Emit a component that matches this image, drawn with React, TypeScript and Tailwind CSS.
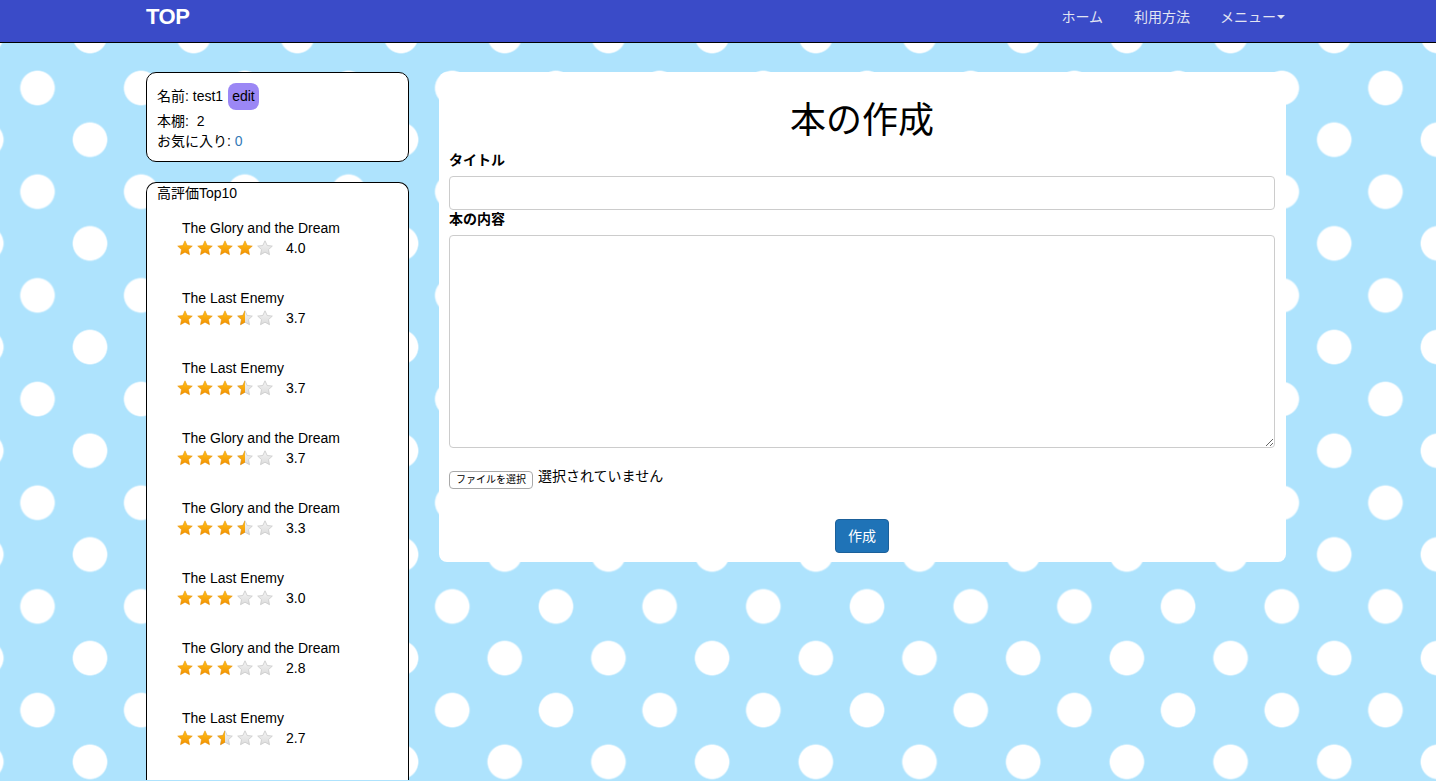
import React from "react";

type Book = { title: string; full: number; half: boolean; score: string };

const books: Book[] = [
  { title: "The Glory and the Dream", full: 4, half: false, score: "4.0" },
  { title: "The Last Enemy", full: 3, half: true, score: "3.7" },
  { title: "The Last Enemy", full: 3, half: true, score: "3.7" },
  { title: "The Glory and the Dream", full: 3, half: true, score: "3.7" },
  { title: "The Glory and the Dream", full: 3, half: true, score: "3.3" },
  { title: "The Last Enemy", full: 3, half: false, score: "3.0" },
  { title: "The Glory and the Dream", full: 3, half: false, score: "2.8" },
  { title: "The Last Enemy", full: 2, half: true, score: "2.7" },
];

const STAR =
  "M8 0.8 L10.2 5.5 L15.3 6.1 L11.5 9.6 L12.5 14.7 L8 12.2 L3.5 14.7 L4.5 9.6 L0.7 6.1 L5.8 5.5 Z";

function Star({ kind, id }: { kind: "full" | "half" | "empty"; id: string }) {
  return (
    <svg width="16" height="16" viewBox="0 0 16 16" className="block">
      <defs>
        <linearGradient id={`g-${id}`} x1="0" y1="0" x2="0" y2="1">
          <stop offset="0" stopColor="#ffc21a" />
          <stop offset="1" stopColor="#f29100" />
        </linearGradient>
        <linearGradient id={`e-${id}`} x1="0" y1="0" x2="0" y2="1">
          <stop offset="0" stopColor="#f4f4f4" />
          <stop offset="1" stopColor="#dcdcdc" />
        </linearGradient>
        <clipPath id={`c-${id}`}>
          <rect x="0" y="0" width="8" height="16" />
        </clipPath>
      </defs>
      {kind !== "full" && (
        <path d={STAR} fill={`url(#e-${id})`} stroke="#c9c9c9" strokeWidth="0.8" strokeLinejoin="round" />
      )}
      {kind === "full" && (
        <path d={STAR} fill={`url(#g-${id})`} stroke="#e58a00" strokeWidth="0.5" strokeLinejoin="round" />
      )}
      {kind === "half" && (
        <path
          d={STAR}
          fill={`url(#g-${id})`}
          stroke="#e58a00"
          strokeWidth="0.5"
          strokeLinejoin="round"
          clipPath={`url(#c-${id})`}
        />
      )}
    </svg>
  );
}

function Stars({ full, half, idx }: { full: number; half: boolean; idx: number }) {
  const items: ("full" | "half" | "empty")[] = [];
  for (let i = 0; i < 5; i++) {
    if (i < full) items.push("full");
    else if (i === full && half) items.push("half");
    else items.push("empty");
  }
  return (
    <div className="flex gap-[4px]">
      {items.map((k, i) => (
        <Star key={i} kind={k} id={`${idx}-${i}`} />
      ))}
    </div>
  );
}

export default function App() {
  return (
    <div
      className="h-[781px] overflow-hidden bg-[#aee3fd] text-[14px] text-black [font-family:'Liberation_Sans','Noto_Sans_CJK_JP',sans-serif] [background-image:radial-gradient(circle_at_51.85px_51.85px,#ffffff_16.5px,rgba(255,255,255,0)_18px),radial-gradient(circle_at_51.85px_51.85px,#ffffff_16.5px,rgba(255,255,255,0)_18px)] [background-size:103.7px_103.7px] [background-position:38.15px_-15.85px,-14.35px_36.15px]"
    >
      {/* Navbar */}
      <nav className="h-[43px] bg-[#3a4bc8] border-b border-black">
        <div className="ml-[146px] w-[1140px] h-[34px] flex items-center justify-between">
          <span className="text-white font-bold text-[22px] leading-none tracking-[-0.5px]">TOP</span>
          <div className="flex items-center text-[14px] text-[#e2e4f2] mr-[1px]">
            <span>ホーム</span>
            <span className="ml-[31px]">利用方法</span>
            <span className="ml-[30px] flex items-center">
              メニュー
              <span className="ml-[1px] w-0 h-0 border-l-[4px] border-r-[4px] border-t-[4px] border-l-transparent border-r-transparent border-t-[#e2e4f2]" />
            </span>
          </div>
        </div>
      </nav>

      <div className="ml-[146px] w-[1140px] flex gap-[30px] pt-[29px]">
        {/* Left column */}
        <div className="w-[263px] shrink-0 flex flex-col">
          <div className="bg-white border border-black rounded-[10px] px-[10px] pt-[10px] pb-[10px] h-[90px]">
            <div className="flex items-center h-[27px]">
              <span>名前: test1</span>
              <span className="ml-[5px] bg-[#9b87f5] rounded-[8px] h-[27px] px-[4px] flex items-center text-[14px]">
                edit
              </span>
            </div>
            <div className="leading-[20px] mt-[1px]">本棚:&nbsp; 2</div>
            <div className="leading-[20px]">
              お気に入り: <span className="text-[#337ab7]">0</span>
            </div>
          </div>

          <div className="mt-[20px] bg-white border border-black border-b-0 rounded-t-[10px] h-[598px] overflow-hidden">
            <div className="px-[10px] leading-[20px]">高評価Top10</div>
            <ul className="mt-[15px]">
              {books.map((b, i) => (
                <li key={i} className="h-[70px] pl-[30px]">
                  <div className="pl-[5px] leading-[20px]">{b.title}</div>
                  <div className="flex items-center mt-[1px]">
                    <Stars full={b.full} half={b.half} idx={i} />
                    <span className="ml-[13px] leading-[18px]">{b.score}</span>
                  </div>
                </li>
              ))}
            </ul>
          </div>
        </div>

        {/* Right column */}
        <div className="w-[847px] h-[490px] bg-white rounded-[8px] pl-[10px] pr-[11px] flex flex-col">
          <h1 className="text-center text-[36px] leading-[40px] mt-[29px] font-normal">本の作成</h1>
          <label className="font-bold mt-[9px] leading-[20px] block">タイトル</label>
          <input
            type="text"
            className="mt-[6px] h-[34px] w-full border border-[#cccccc] rounded-[4px] outline-none"
          />
          <label className="font-bold leading-[20px] block mt-[-1px]">本の内容</label>
          <textarea className="mt-[6px] h-[213px] w-full border border-[#cccccc] rounded-[4px] outline-none resize-y" />
          <div className="flex items-center mt-[23px]">
            <span className="h-[18px] px-[6px] border border-[#a9a9a9] rounded-[4px] text-[10px] leading-[16px] bg-white text-black">
              ファイルを選択
            </span>
            <span className="ml-[5px] leading-[20px] mt-[-8px]">選択されていません</span>
          </div>
          <div className="flex justify-center mt-[30px]">
            <button className="w-[54px] h-[34px] bg-[#1f73b7] text-white rounded-[4px] border border-[#1b609a] text-[14px]">
              作成
            </button>
          </div>
        </div>
      </div>
    </div>
  );
}
